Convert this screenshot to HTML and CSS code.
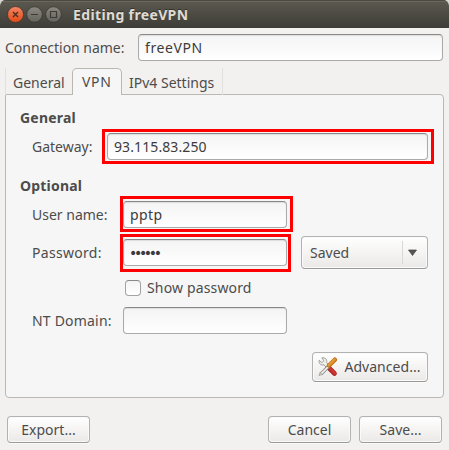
FILE: index.html
```html
<!DOCTYPE html>
<html lang="en">
<head>
<meta charset="utf-8">
<title>Editing freeVPN</title>
<link rel="stylesheet" href="styles.css">
</head>
<body>
<div class="window">
  <header class="titlebar">
    <svg class="controls" width="56" height="18" viewBox="0 0 56 18">
      <defs>
        <linearGradient id="orange" x1="0" y1="0" x2="0" y2="1"><stop offset="0" stop-color="#f58664"/><stop offset="1" stop-color="#df4a16"/></linearGradient>
        <linearGradient id="grey" x1="0" y1="0" x2="0" y2="1"><stop offset="0" stop-color="#8b8981"/><stop offset="1" stop-color="#64625b"/></linearGradient>
      </defs>
      <circle cx="8.5" cy="8.500" r="8" fill="url(#orange)" stroke="#34322d" stroke-width=".7"/>
      <circle cx="27.5" cy="8.500" r="7.800" fill="url(#grey)" stroke="#34332e" stroke-width=".7"/>
      <circle cx="46.5" cy="8.500" r="7.800" fill="url(#grey)" stroke="#34332e" stroke-width=".7"/>
      <path d="M6 6l5 5M11 6l-5 5" stroke="#4b2b1e" stroke-width="1.3"/>
      <path d="M24 8.500h7" stroke="#3c3b37" stroke-width="1.2"/>
      <path d="M43.500 5.500h6v6h-6z" fill="none" stroke="#3c3b37" stroke-width="1.2"/>
    </svg>
    <h1 class="title">Editing freeVPN</h1>
  </header>

  <div class="connection">
    <span class="connection-label">Connection name:</span>
    <div class="entry t-name">freeVPN</div>
  </div>

  <nav class="tabs">
    <div class="tab tab-general">General</div>
    <div class="tab tab-active">VPN</div>
    <div class="tab tab-ipv4">IPv4 Settings</div>
  </nav>

  <main class="panel">
    <h2 class="heading">General</h2>
    <div class="row gateway">
      <span class="label">Gateway:</span>
      <div class="entry t-ip">93.115.83.250<i class="mark mark-gateway"></i></div>
    </div>
    <h2 class="heading optional">Optional</h2>
    <div class="row user">
      <span class="label">User name:</span>
      <div class="entry t-pptp">pptp<i class="mark mark-user"></i></div>
    </div>
    <div class="row password">
      <span class="label t-password">Password:</span>
      <div class="entry dots">••••••<i class="mark mark-password"></i></div>
      <div class="combo button"><span>Saved</span><span class="combo-arrow"><svg width="9" height="7" viewBox="0 0 9 7"><path d="M.5 1h8L4.500 6.500z" fill="#555" stroke="#444" stroke-width=".7"/></svg></span></div>
    </div>
    <div class="check-row"><span class="check"></span><span class="t-show">Show password</span></div>
    <div class="row domain">
      <span class="label t-domain">NT Domain:</span>
      <div class="entry"></div>
    </div>
    <div class="button advanced">
      <svg width="20" height="20" viewBox="0 0 20 20">
        <defs>
          <linearGradient id="gold" x1="0" y1="0" x2="1" y2="1"><stop offset="0" stop-color="#f4bb55"/><stop offset="1" stop-color="#c9700d"/></linearGradient>
          <linearGradient id="red" x1="0" y1="1" x2="1" y2="0"><stop offset="0" stop-color="#a71919"/><stop offset="1" stop-color="#ed5148"/></linearGradient>
        </defs>
        <path d="M9.500 9.500l7 7" stroke="#a51c1c" stroke-width="4.600" stroke-linecap="round"/>
        <path d="M10.500 10.500l6 6" stroke="url(#red)" stroke-width="3" stroke-linecap="round"/>
        <path d="M1.200 3.200l2.700 2.400 2-1.800-2-2.900c3-.8 5.500 1.500 4.700 4.600l2.600 3-2.500 2.300-2.800-3C3 8.800.4 6.500 1.200 3.200z" fill="#eeeeec" stroke="#8b8d88" stroke-width=".8"/>
        <path d="M11 9L3 17" stroke="#888a85" stroke-width="3.200"/>
        <path d="M11 9L2.600 17.400" stroke="#f5f5f3" stroke-width="1.600"/>
        <path d="M1 18.600l1-3 2 2z" fill="#d3d7cf" stroke="#888a85" stroke-width=".6"/>
        <path d="M11 8.500l5.800-5.800" stroke="#bd6910" stroke-width="4.400" stroke-linecap="round"/>
        <path d="M11.100 8.300l5.500-5.500" stroke="url(#gold)" stroke-width="3" stroke-linecap="round"/>
      </svg>
      <span>Advanced...</span>
    </div>
  </main>

  <footer class="footer">
    <div class="button">Export...</div>
    <div class="button cancel">Cancel</div>
    <div class="button">Save...</div>
  </footer>
</div>
</body>
</html>
```
FILE: styles.css
```css
* { box-sizing: border-box; }
body {
  margin: 0;
  background: #d5d5d3;
  color: #4c4c4c;
  font: 14px/20px "Noto Sans", "Open Sans", sans-serif;
  white-space: nowrap;
}
.window {
  width: 449px;
  height: 450px;
  overflow: hidden;
  border-radius: 6px 6px 0 0;
  background: #f2f1f0;
}
.titlebar {
  display: flex;
  align-items: center;
  height: 28px;
  padding-left: 7px;
  background: linear-gradient(#5c5a50, #3d3c37);
  box-shadow: inset 0 1px #4c4a42, inset 0 2px #69675d;
}
.controls { display: block; margin-top: 2px; }
.title {
  margin: 2px 0 0 10px;
  color: #dfdbd2;
  font-size: 14px;
  line-height: 20px;
  letter-spacing: 0.36px;
  text-shadow: 0 -1px #33322e;
}
.connection {
  display: flex;
  align-items: center;
  padding: 6px 6px 0 5px;
}
.connection-label { width: 133px; letter-spacing: -0.03px; }
.entry {
  position: relative;
  flex: 1;
  height: 27px;
  padding: 3px 6px;
  border: 1px solid #aaa;
  border-top-color: #888;
  border-radius: 4px;
  background: linear-gradient(#f4f4f4, #fff);
  box-shadow: inset 0 1px 1px #ddd;
  color: #3c3c3c;
}
.t-name { letter-spacing: 0.6px; }
.t-ip { letter-spacing: 0.1px; }
.t-pptp { letter-spacing: 0.4px; }
.t-password { letter-spacing: 0.3px; }
.t-show { letter-spacing: 0.15px; }
.t-domain { letter-spacing: 0.2px; }
.tabs {
  position: relative;
  z-index: 1;
  display: flex;
  height: 27px;
  margin: 7px 5px -1px;
}
.tab { padding-top: 5px; }
.tab-general { width: 67px; padding-left: 7px; border-left: 1px solid #e2e0de; }
.tab-active {
  width: 50px;
  padding: 3px 0 0 9px;
  border: 1px solid #bbb7b2;
  border-bottom: 0;
  border-radius: 5px 5px 0 0;
  background: #f6f6f6;
  letter-spacing: 0.7px;
}
.tab-ipv4 { width: 101px; padding-left: 7px; border-right: 1px solid #e2e0de; }
.panel {
  display: flex;
  flex-direction: column;
  width: 439px;
  height: 304px;
  margin-left: 5px;
  padding: 13px 15px 0 14px;
  border: 1px solid #bbb7b2;
  border-radius: 0 4px 4px 4px;
  background: #f6f6f6;
}
.heading {
  margin: 0;
  font-size: 14px;
  line-height: 20px;
  letter-spacing: 0.2px;
}
.row {
  display: flex;
  align-items: center;
  padding-left: 12px;
}
.row .entry { flex: none; width: 164px; }
.label { width: 91px; }
.gateway { margin-top: 5px; }
.gateway .label { width: 75px; }
.row.gateway .entry { width: 321px; }
.optional { margin-top: 16px; }
.user { margin-top: 5px; }
.password { height: 33px; margin-top: 8px; }
.mark {
  position: absolute;
  border: 3px solid #f00;
}
.mark-gateway { inset: -5px -7px -5px -6px; }
.mark-user { inset: -6px -7px -5px -4px; }
.mark-password { inset: -6px -5px -7px -4px; }
.entry.dots {
  padding-left: 5px;
  font: 14px/20px "DejaVu Sans", sans-serif;
  letter-spacing: -3.3px;
}
.button {
  display: flex;
  align-items: center;
  justify-content: center;
  width: 83px;
  height: 27px;
  border: 1px solid #b2b2b2;
  border-bottom-color: #999;
  border-radius: 4px;
  background: linear-gradient(#fff, #ebe9e7);
  box-shadow: inset 0 0 0 1px #fafafa, 0 1px #fafafa;
}
.combo {
  width: 127px;
  height: 33px;
  margin-left: 14px;
  padding: 0 10px 0 8px;
  justify-content: space-between;
}
.combo-arrow {
  display: flex;
  align-items: center;
  height: 23px;
  padding-left: 5px;
  border-left: 1px solid #dad8d6;
}
.check-row {
  display: flex;
  align-items: center;
  height: 20px;
  margin: 9px 0 0 105px;
}
.check {
  width: 16px;
  height: 16px;
  margin-right: 6px;
  border: 1px solid #a2a2a2;
  border-top-color: #888;
  border-radius: 4px;
  background: linear-gradient(#f4f4f4, #fff);
}
.domain { margin-top: 9px; }
.advanced {
  width: 116px;
  height: 30px;
  margin: 18px 0 0 auto;
  padding-right: 1px;
  letter-spacing: 0.05px;
}
.advanced svg { margin-right: 6px; }
.footer { display: flex; gap: 8px; padding: 18px 7px 0; }
.cancel { margin-left: auto; }
```
